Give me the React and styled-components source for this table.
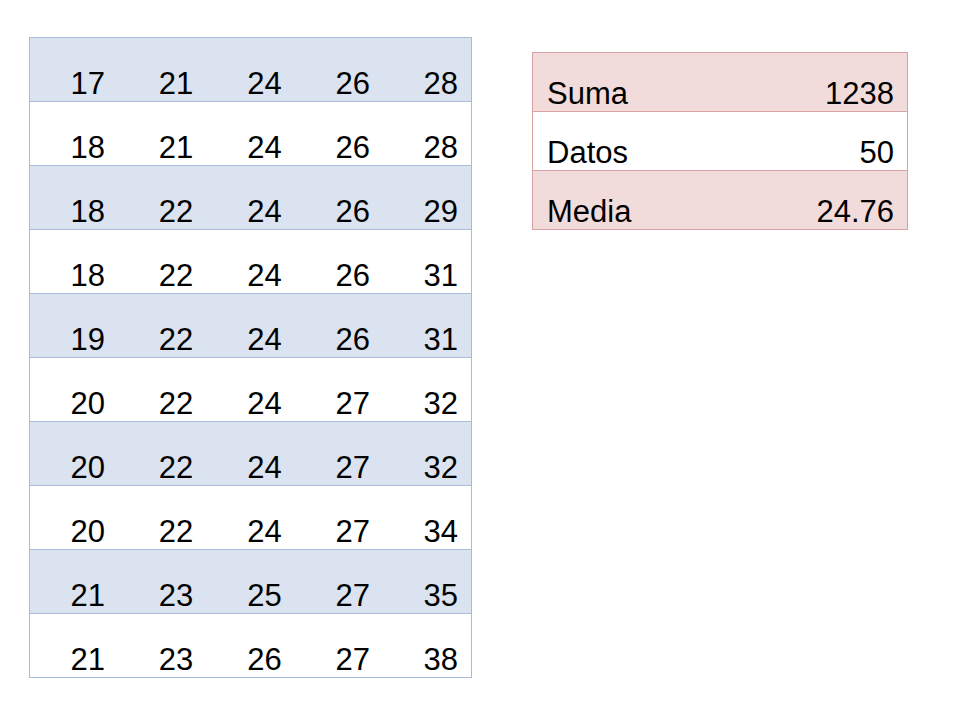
import React from "react";
import styled, { createGlobalStyle } from "styled-components";

const GlobalStyle = createGlobalStyle`
  html, body {
    margin: 0;
    padding: 0;
    background: #ffffff;
  }
  body {
    font-family: "Liberation Sans", Arial, sans-serif;
    color: #000;
  }
`;

const Page = styled.div`
  display: flex;
  align-items: flex-start;
  gap: 60px;
  padding: 37px 0 0 29px;
  width: 960px;
  height: 720px;
  box-sizing: border-box;
`;

const Table = styled.table`
  border-collapse: collapse;
  width: ${(p) => p.$width}px;
  margin-top: ${(p) => p.$offset || 0}px;
  border: 1px solid ${(p) => p.$line};
  table-layout: fixed;
`;

const Row = styled.tr`
  height: ${(p) => p.$h}px;
  background: ${(p) => (p.$shade ? p.$fill : "#ffffff")};
  border-bottom: 1px solid ${(p) => p.$line};
`;

const Cell = styled.td`
  padding: 0 13px 2px 14px;
  vertical-align: bottom;
  font-size: 31px;
  line-height: 31px;
  text-align: ${(p) => p.$align || "right"};
  white-space: nowrap;
`;

const data = [
  [17, 21, 24, 26, 28],
  [18, 21, 24, 26, 28],
  [18, 22, 24, 26, 29],
  [18, 22, 24, 26, 31],
  [19, 22, 24, 26, 31],
  [20, 22, 24, 27, 32],
  [20, 22, 24, 27, 32],
  [20, 22, 24, 27, 34],
  [21, 23, 25, 27, 35],
  [21, 23, 26, 27, 38],
];

const stats = [
  ["Suma", "1238"],
  ["Datos", "50"],
  ["Media", "24.76"],
];

const BLUE = "#dbe3f0";
const BLUE_LINE = "#a7bcd9";
const PINK = "#f2dcdb";
const PINK_LINE = "#d6a3a2";

export default function App() {
  return (
    <>
      <GlobalStyle />
      <Page>
        <Table $width={443} $line={BLUE_LINE}>
          <tbody>
            {data.map((row, i) => (
              <Row key={i} $h={64} $shade={i % 2 === 0} $fill={BLUE} $line={BLUE_LINE}>
                {row.map((v, j) => (
                  <Cell key={j}>{v}</Cell>
                ))}
              </Row>
            ))}
          </tbody>
        </Table>
        <Table $width={376} $offset={15} $line={PINK_LINE}>
          <tbody>
            {stats.map(([label, value], i) => (
              <Row key={label} $h={59} $shade={i % 2 === 0} $fill={PINK} $line={PINK_LINE}>
                <Cell $align="left">{label}</Cell>
                <Cell>{value}</Cell>
              </Row>
            ))}
          </tbody>
        </Table>
      </Page>
    </>
  );
}
